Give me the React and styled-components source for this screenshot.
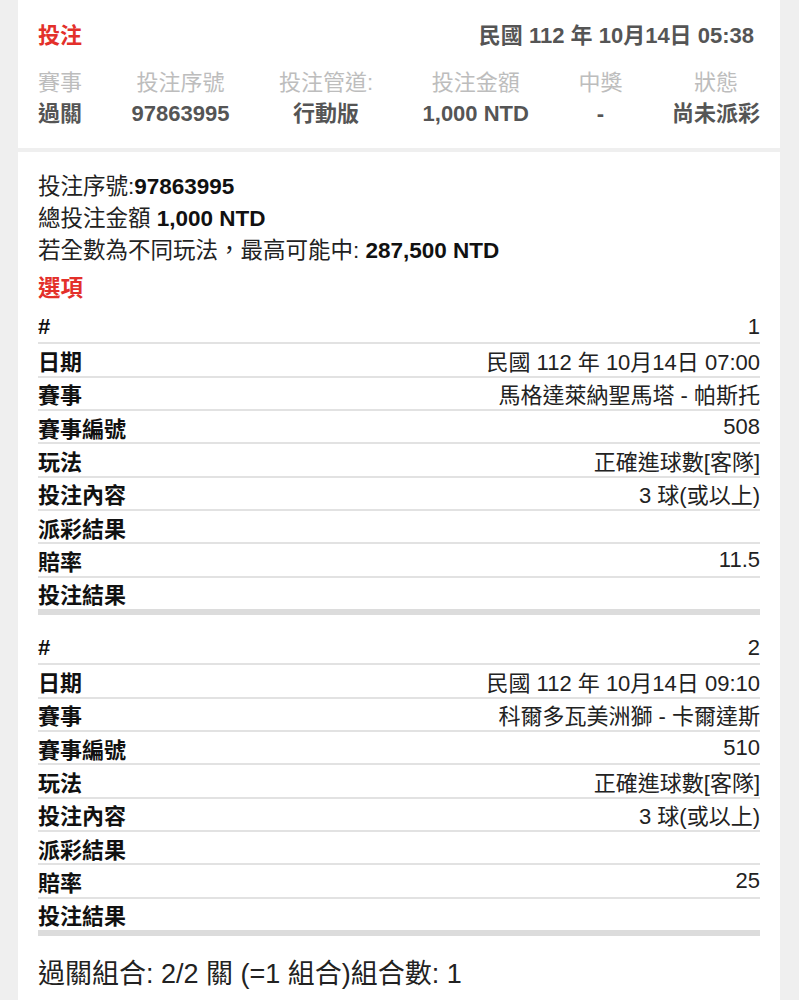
import React from "react";
import styled, { createGlobalStyle } from "styled-components";

const GlobalStyle = createGlobalStyle`
  body {
    margin: 0;
    background: #efefef;
    font-family: "Liberation Sans", "Noto Sans CJK TC", sans-serif;
  }
`;

// summary columns in the top card
const summary = [
  { label: "賽事", value: "過關" },
  { label: "投注序號", value: "97863995" },
  { label: "投注管道:", value: "行動版" },
  { label: "投注金額", value: "1,000 NTD" },
  { label: "中獎", value: "-" },
  { label: "狀態", value: "尚未派彩" },
];

const selections = [
  {
    no: "1",
    date: "民國 112 年 10月14日 07:00",
    match: "馬格達萊納聖馬塔 - 帕斯托",
    matchNo: "508",
    play: "正確進球數[客隊]",
    content: "3 球(或以上)",
    payout: "",
    odds: "11.5",
    result: "",
  },
  {
    no: "2",
    date: "民國 112 年 10月14日 09:10",
    match: "科爾多瓦美洲獅 - 卡爾達斯",
    matchNo: "510",
    play: "正確進球數[客隊]",
    content: "3 球(或以上)",
    payout: "",
    odds: "25",
    result: "",
  },
];

const rowDefs = [
  ["#", "no"],
  ["日期", "date"],
  ["賽事", "match"],
  ["賽事編號", "matchNo"],
  ["玩法", "play"],
  ["投注內容", "content"],
  ["派彩結果", "payout"],
  ["賠率", "odds"],
  ["投注結果", "result"],
];

const App = () => {
  return (
    <>
      <GlobalStyle />
      <Page>
        <Card $top>
          <Header>
            <Title>投注</Title>
            <HeaderDate>民國 112 年 10月14日 05:38</HeaderDate>
          </Header>
          <SummaryRow>
            {summary.map((col) => (
              <SummaryCol key={col.label}>
                <SummaryLabel>{col.label}</SummaryLabel>
                <SummaryValue>{col.value}</SummaryValue>
              </SummaryCol>
            ))}
          </SummaryRow>
        </Card>

        <Card>
          <InfoLine>
            投注序號:<strong>97863995</strong>
          </InfoLine>
          <InfoLine>
            總投注金額 <strong>1,000 NTD</strong>
          </InfoLine>
          <InfoLine>
            若全數為不同玩法，最高可能中: <strong>287,500 NTD</strong>
          </InfoLine>
          <SectionTitle>選項</SectionTitle>

          {selections.map((sel) => (
            <Block key={sel.no}>
              {rowDefs.map(([label, key], i) => (
                <Row key={key} $last={i === rowDefs.length - 1}>
                  <RowLabel>{label}</RowLabel>
                  <RowValue>{sel[key]}</RowValue>
                </Row>
              ))}
            </Block>
          ))}

          <Footer>過關組合: 2/2 關 (=1 組合)組合數: 1</Footer>
        </Card>
      </Page>
    </>
  );
};

export default App;

// Styled Components

const Page = styled.div`
  display: flex;
  flex-direction: column;
  gap: 4px;
  padding: 0 19px 0 18px;
`;

const Card = styled.div`
  background: #fff;
  padding: ${(p) => (p.$top ? "20px 20px 19px" : "19px 20px 40px")};
`;

const Header = styled.div`
  display: flex;
  justify-content: space-between;
  align-items: center;
  height: 26px;
  padding-right: 6px;
`;

const Title = styled.div`
  color: #e3302a;
  font-size: 22px;
  font-weight: bold;
`;

const HeaderDate = styled.div`
  color: #555;
  font-size: 22px;
  font-weight: bold;
`;

const SummaryRow = styled.div`
  display: flex;
  justify-content: space-between;
  margin-top: 22px;
`;

const SummaryCol = styled.div`
  display: flex;
  flex-direction: column;
  align-items: center;
  text-align: center;
`;

const SummaryLabel = styled.div`
  color: #bdbdbd;
  font-size: 22px;
  line-height: 30px;
`;

const SummaryValue = styled.div`
  color: #555;
  font-size: 22px;
  font-weight: bold;
  line-height: 31px;
`;

const InfoLine = styled.div`
  color: #222;
  font-size: 22.5px;
  line-height: 32px;

  strong {
    color: #111;
  }
`;

const SectionTitle = styled.div`
  color: #e3302a;
  font-size: 22.5px;
  font-weight: bold;
  line-height: 32px;
  margin: 6px 0 6px;
`;

const Block = styled.div`
  margin-bottom: 17px;
`;

const Row = styled.div`
  display: flex;
  justify-content: space-between;
  align-items: center;
  height: 31.33px;
  border-bottom: ${(p) => (p.$last ? "6px solid #dcdcdc" : "2px solid #e2e2e2")};
`;

const RowLabel = styled.div`
  color: #111;
  font-size: 22px;
  font-weight: bold;
`;

const RowValue = styled.div`
  color: #222;
  font-size: 22px;
`;

const Footer = styled.div`
  color: #222;
  font-size: 27px;
  line-height: 36px;
  margin-top: 20px;
`;
